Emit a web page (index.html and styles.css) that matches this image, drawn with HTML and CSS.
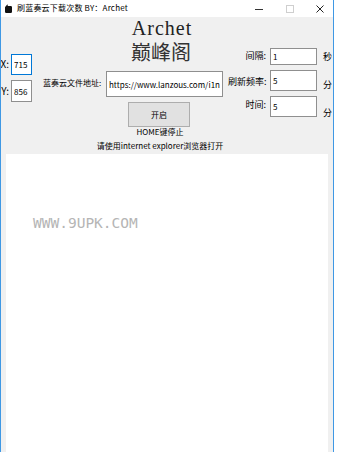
FILE: index.html
```html
<!DOCTYPE html>
<html lang="zh-CN">
<head>
  <meta charset="UTF-8">
  <title>刷蓝奏云下载次数</title>
  <meta name="viewport" content="width=device-width, initial-scale=1.0">
  <link rel="stylesheet" href="styles.css">
</head>
<body>

<div class="window">
  <div class="titlebar">
    <svg class="app-icon" width="7" height="9" viewBox="0 0 7 9">
      <path d="M0.5 2.5 L2.5 0.3 L2.8 2 L5.8 2 Q7 2 7 3.2 L7 7.8 Q7 9 5.8 9 L1.2 9 Q0 9 0 7.8 L0 3.2 Z" fill="#111"/>
    </svg>
    <span class="title">刷蓝奏云下载次数 BY：Archet</span>
    <div class="caption-btns">
      <div class="cap"><span class="min-glyph"></span></div>
      <div class="cap"><span class="max-glyph"></span></div>
      <div class="cap close">
        <svg width="8" height="8" viewBox="0 0 8 8">
          <path d="M0.5 0.5 L7.5 7.5 M7.5 0.5 L0.5 7.5" stroke="#222" stroke-width="1"/>
        </svg>
      </div>
    </div>
  </div>

  <div class="client">
    <div class="top">
      <div class="col-left">
        <div class="coord first">
          <label>X:</label>
          <input type="text" class="field focus" value="715" readonly>
        </div>
        <div class="coord second">
          <label>Y:</label>
          <input type="text" class="field" value="856" readonly>
        </div>
      </div>

      <div class="col-mid">
        <div class="brand">Archet</div>
        <div class="brand-cn">巅峰阁</div>
        <div class="url-row">
          <label>蓝奏云文件地址:</label>
          <input type="text" class="field url" value="https://www.lanzous.com/i1nucxe" readonly>
        </div>
        <button type="button" class="start">开启</button>
        <div class="note home">HOME键停止</div>
        <div class="note">请使用internet explorer浏览器打开</div>
      </div>

      <div class="col-right">
        <div class="opt r1">
          <label>间隔:</label>
          <input type="text" class="field" value="1" readonly>
          <span class="unit">秒</span>
        </div>
        <div class="opt r2">
          <label>刷新频率:</label>
          <input type="text" class="field" value="5" readonly>
          <span class="unit">分</span>
        </div>
        <div class="opt r3">
          <label>时间:</label>
          <input type="text" class="field" value="5" readonly>
          <span class="unit">分</span>
        </div>
      </div>
    </div>

    <div class="browser">
      <div class="watermark">WWW.9UPK.COM</div>
    </div>
  </div>
</div>

</body>
</html>
```

FILE: styles.css
```css
* {
  margin: 0;
  padding: 0;
  box-sizing: border-box;
}

html, body {
  height: 100%;
  background: #fff;
  font-family: 'Noto Sans CJK SC', 'Noto Sans', sans-serif;
  color: #000;
  overflow: hidden;
}

.window {
  width: 334px;
  height: 452px;
  border-left: 1px solid #3f98e4;
  border-right: 1px solid #3f98e4;
  display: flex;
  flex-direction: column;
  overflow: hidden;
}

/* title bar */
.titlebar {
  height: 17px;
  background: #fff;
  display: flex;
  align-items: center;
  padding-left: 4px;
  flex-shrink: 0;
}

.app-icon {
  display: block;
  margin-top: -1px;
}

.title {
  margin-left: 5px;
  font-size: 8px;
  line-height: 10px;
  letter-spacing: 0.2px;
  margin-top: -1px;
}

.caption-btns {
  margin-left: auto;
  display: flex;
  height: 100%;
}

.cap {
  width: 31px;
  display: flex;
  align-items: center;
  justify-content: center;
}

.cap.close {
  width: 28px;
  padding-left: 2px;
}

.cap svg {
  display: block;
}

.min-glyph {
  width: 8px;
  height: 1px;
  background: #333;
  margin-top: 1px;
}

.max-glyph {
  width: 8px;
  height: 8px;
  border: 1px solid #cfcfcf;
}

/* client area */
.client {
  flex: 1;
  background: #f0f0f0;
  display: flex;
  flex-direction: column;
}

.top {
  height: 137px;
  display: flex;
  flex-shrink: 0;
}

.field {
  display: block;
  border: 1px solid #8f8f8f;
  background: #fff;
  font-family: 'Noto Sans CJK SC', 'Noto Sans', sans-serif;
  font-size: 8px;
  color: #000;
  padding: 0 2px;
  outline: none;
}

.field.focus {
  border-color: #0078d7;
}

/* left column */
.col-left {
  width: 39px;
}

.coord {
  display: flex;
  align-items: center;
}

.coord.first {
  margin-top: 37px;
}

.coord.second {
  margin-top: 5px;
}

.coord label {
  width: 8px;
  display: flex;
  justify-content: flex-end;
  font-size: 10px;
  white-space: nowrap;
  margin-top: -2px;
}

.coord .field {
  margin-left: 2px;
  width: 21px;
  height: 21px;
}

.coord.second .field {
  height: 22px;
}

/* middle column */
.col-mid {
  width: 188px;
}

.brand {
  margin-top: 1px;
  padding-left: 56px;
  text-align: center;
  font-family: 'Liberation Serif', serif;
  font-size: 20px;
  line-height: 20px;
  letter-spacing: 1px;
  color: #222;
}

.brand-cn {
  margin-top: 3px;
  padding-left: 54px;
  text-align: center;
  font-size: 20px;
  line-height: 21px;
  color: #333;
}

.url-row {
  margin-top: 9px;
  height: 26px;
  display: flex;
  align-items: center;
  padding-left: 3px;
}

.url-row label {
  width: 60px;
  font-size: 8px;
  white-space: nowrap;
  margin-bottom: 4px;
}

.url-row .field {
  margin-left: 3px;
  width: 117px;
  height: 26px;
}

.start {
  display: block;
  margin: 5px 0 0 88px;
  width: 62px;
  height: 25px;
  background: #e1e1e1;
  border: 1px solid #adadad;
  font-family: 'Noto Sans CJK SC', sans-serif;
  font-size: 8px;
  color: #000;
}

.note {
  padding-left: 52px;
  text-align: center;
  font-size: 8px;
  line-height: 10px;
  white-space: nowrap;
}

.note + .note {
  margin-top: 4px;
}

/* right column */
.col-right {
  width: 105px;
}

.opt {
  display: flex;
  align-items: flex-start;
}

.opt label {
  width: 38px;
  text-align: right;
  font-size: 9px;
  line-height: 10px;
  white-space: nowrap;
}

.opt .field {
  margin-left: 4px;
  width: 47px;
  height: 21px;
}

.unit {
  margin-left: 6px;
  font-size: 9px;
  line-height: 10px;
}

.opt.r1 {
  margin-top: 31px;
}

.opt.r1 .field {
  height: 17px;
}

.opt.r1 label {
  margin-top: 3px;
}

.opt.r1 .unit {
  margin-top: 4px;
}

.opt.r2 {
  margin-top: 5px;
}

.opt.r2 label {
  margin-top: 7px;
}

.opt.r2 .unit {
  margin-top: 10px;
}

.opt.r3 {
  margin-top: 5px;
}

.opt.r3 label {
  margin-top: 4px;
}

.opt.r3 .unit {
  margin-top: 12px;
}

/* embedded browser */
.browser {
  flex: 1;
  margin: 0 5px;
  background: #fff;
  padding: 61px 0 0 27px;
}

.watermark {
  font-family: 'DejaVu Sans Mono', monospace;
  font-size: 14.5px;
  line-height: 17px;
  color: #b5b5b5;
}
```
